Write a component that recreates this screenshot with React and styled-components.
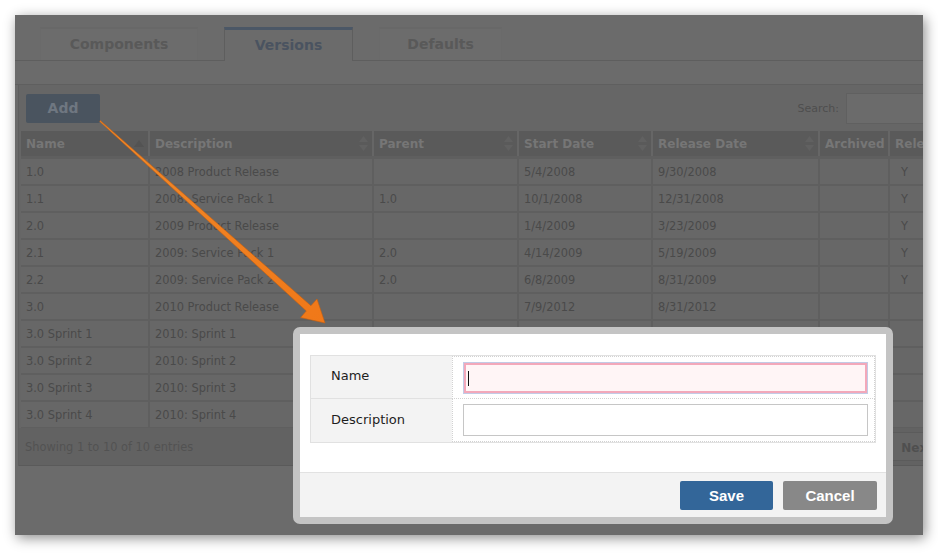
import styled, { createGlobalStyle } from 'styled-components';

const GlobalStyle = createGlobalStyle`
    html, body {
        margin: 0;
        padding: 0;
        background: #ffffff;
    }
    body {
        font-family: "DejaVu Sans", Verdana, sans-serif;
    }
`;

const COLS = '127px 222px 143px 132px 165px 68px 60px 80px';

const Page = styled.div`
    position: relative;
    width: 938px;
    height: 555px;
    padding: 15px;
    box-sizing: border-box;
    overflow: hidden;
`;
const Screen = styled.div`
    position: relative;
    width: 908px;
    height: 520px;
    overflow: hidden;
    background: #6b6b6b;
    box-shadow: 2px 3px 12px rgba(0, 0, 0, 0.45);
`;
const TabBar = styled.div`
    display: flex;
    align-items: flex-end;
    gap: 26px;
    height: 46px;
    padding-left: 25px;
    box-sizing: border-box;
    border-bottom: 1px solid #5e5e5e;
`;
const Tab = styled.div`
    width: ${(p) => p.$w}px;
    height: ${(p) => (p.$active ? 34 : 33)}px;
    box-sizing: border-box;
    display: flex;
    align-items: center;
    justify-content: center;
    padding-bottom: 2px;
    font-weight: bold;
    font-size: 14px;
    color: ${(p) => (p.$active ? '#4a5360' : '#595959')};
    background: ${(p) => (p.$active ? '#6b6b6b' : '#6c6c6c')};
    border-top: ${(p) => (p.$active ? '3px solid #4b5766' : '2px solid #686868')};
    border-left: 1px solid ${(p) => (p.$active ? '#5e5e5e' : '#6a6a6a')};
    border-right: 1px solid ${(p) => (p.$active ? '#5e5e5e' : '#6a6a6a')};
    margin-bottom: ${(p) => (p.$active ? '-1px' : '0')};
`;
const Strip = styled.div`
    height: 23px;
    border-bottom: 1px solid #5f5f5f;
`;
const Panel = styled.div`
    margin-left: 3px;
    width: 985px;
    background: #666666;
    border-left: 1px solid #5f5f5f;
`;
const Toolbar = styled.div`
    display: flex;
    align-items: center;
    justify-content: space-between;
    height: 46px;
    padding: 0 8px 0 7px;
`;
const AddButton = styled.div`
    width: 74px;
    height: 29px;
    display: flex;
    align-items: center;
    justify-content: center;
    background: #4a545f;
    border-radius: 2px;
    color: #6f7781;
    font-weight: bold;
    font-size: 14px;
`;
const SearchGroup = styled.div`
    display: flex;
    align-items: center;
    gap: 7px;
    font-size: 11px;
    color: #4e4e4e;
`;
const SearchInput = styled.div`
    width: 148px;
    height: 29px;
    background: #6b6b6b;
    border: 1px solid #606060;
`;
const Table = styled.div`
    padding-left: 2px;
`;
const HeadRow = styled.div`
    display: grid;
    grid-template-columns: ${COLS};
    column-gap: 2px;
    height: 25px;
`;
const HeadCell = styled.div`
    position: relative;
    display: flex;
    align-items: center;
    padding-left: 5px;
    background: #5a5a5a;
    color: #767676;
    font-weight: bold;
    font-size: 12px;
    white-space: nowrap;
    overflow: hidden;
`;
const SortMark = styled.svg`
    position: absolute;
    right: 4px;
    top: 50%;
    transform: translateY(-50%);
`;
const Body = styled.div`
    display: grid;
    row-gap: 2px;
    padding: 3px 0 1px;
    background: #5f5f5f;
`;
const Row = styled.div`
    display: grid;
    grid-template-columns: ${COLS};
    column-gap: 2px;
    height: 25px;
`;
const Cell = styled.div`
    display: flex;
    align-items: center;
    padding-left: ${(p) => (p.$center ? '11px' : '5px')};
    background: #676767;
    color: #4a4a4a;
    font-size: 11.4px;
    white-space: nowrap;
    overflow: hidden;
`;
const Footer = styled.div`
    display: flex;
    align-items: center;
    justify-content: space-between;
    height: 38px;
    box-sizing: border-box;
    padding: 0 0 0 6px;
    background: #626262;
    border-bottom: 1px solid #5a5a5a;
    font-size: 11.4px;
    color: #525252;
`;
const Pager = styled.div`
    display: flex;
    gap: 4px;
    margin-right: 62px;
`;
const PageBtn = styled.div`
    height: 25px;
    display: flex;
    align-items: center;
    padding: 2px 8px 0;
    background: #656565;
    border: 1px solid #5b5b5b;
    font-weight: bold;
    font-size: 12px;
    color: #4f4f4f;
`;

const Dialog = styled.div`
    position: absolute;
    left: 278px;
    top: 312px;
    width: 600px;
    height: 197px;
    box-sizing: border-box;
    border: 7px solid #c4c4c4;
    border-radius: 7px;
    background: #ffffff;
    display: flex;
    flex-direction: column;
`;
const DialogBody = styled.div`
    padding: 21px 10px 0;
`;
const Form = styled.div`
    display: grid;
    grid-template-columns: 141px 1fr;
    border: 1px solid #e1e1e1;
`;
const Label = styled.div`
    height: 43px;
    box-sizing: border-box;
    display: flex;
    align-items: center;
    padding: 0 0 3px 20px;
    background: #f3f3f3;
    border-bottom: ${(p) => (p.$last ? 'none' : '1px solid #e1e1e1')};
    font-size: 13px;
    color: #1e1e1e;
`;
const Field = styled.div`
    height: 43px;
    box-sizing: border-box;
    padding: 5px 6px 0 10px;
    border: 1px dotted #d2d2d2;
    border-top: ${(p) => (p.$last ? 'none' : '1px dotted #d2d2d2')};
`;
const TextBox = styled.div`
    height: 32px;
    box-sizing: border-box;
    display: flex;
    align-items: center;
    padding-left: 4px;
    background: ${(p) => (p.$invalid ? '#fff5f6' : '#ffffff')};
    border: 1px solid ${(p) => (p.$invalid ? '#c2cbe6' : '#c6c6c6')};
    box-shadow: ${(p) => (p.$invalid ? 'inset 0 0 0 2px #f3a8ba' : 'none')};
`;
const Caret = styled.span`
    width: 1px;
    height: 15px;
    background: #111111;
`;
const DialogFooter = styled.div`
    margin-top: auto;
    height: 45px;
    box-sizing: border-box;
    display: flex;
    justify-content: flex-end;
    align-items: flex-start;
    gap: 10px;
    padding: 8px 9px 0 0;
    background: #f3f3f3;
    border-top: 1px solid #e2e2e2;
`;
const Button = styled.div`
    width: ${(p) => p.$w}px;
    height: 29px;
    display: flex;
    align-items: center;
    justify-content: center;
    padding-bottom: 1px;
    box-sizing: border-box;
    border-radius: 2px;
    background: ${(p) => p.$bg};
    color: #ffffff;
    font-family: "Liberation Sans", Arial, sans-serif;
    font-weight: bold;
    font-size: 15px;
`;
const Arrow = styled.svg`
    position: absolute;
    left: 0;
    top: 0;
    pointer-events: none;
`;

const columns = [
    { title: 'Name', sort: 'asc' },
    { title: 'Description', sort: 'both' },
    { title: 'Parent', sort: 'both' },
    { title: 'Start Date', sort: 'both' },
    { title: 'Release Date', sort: 'both' },
    { title: 'Archived' },
    { title: 'Released' },
    { title: '' },
];

// rows below the dialog only show their first two columns
const rows = [
    ['1.0', '2008 Product Release', '', '5/4/2008', '9/30/2008', '', 'Y'],
    ['1.1', '2008: Service Pack 1', '1.0', '10/1/2008', '12/31/2008', '', 'Y'],
    ['2.0', '2009 Product Release', '', '1/4/2009', '3/23/2009', '', 'Y'],
    ['2.1', '2009: Service Pack 1', '2.0', '4/14/2009', '5/19/2009', '', 'Y'],
    ['2.2', '2009: Service Pack 2', '2.0', '6/8/2009', '8/31/2009', '', 'Y'],
    ['3.0', '2010 Product Release', '', '7/9/2012', '8/31/2012', '', ''],
    ['3.0 Sprint 1', '2010: Sprint 1', '', '', '', '', ''],
    ['3.0 Sprint 2', '2010: Sprint 2', '', '', '', '', ''],
    ['3.0 Sprint 3', '2010: Sprint 3', '', '', '', '', ''],
    ['3.0 Sprint 4', '2010: Sprint 4', '', '', '', '', ''],
];

function SortIcon({ dir }) {
    if (dir === 'asc') {
        return (
            <SortMark width="10" height="8" viewBox="0 0 10 8">
                <polygon points="5,0 10,7 0,7" fill="#535353" />
            </SortMark>
        );
    }
    return (
        <SortMark width="9" height="16" viewBox="0 0 9 16">
            <polygon points="4.5,0 9,6 0,6" fill="#616161" />
            <polygon points="0,9 9,9 4.5,15" fill="#616161" />
        </SortMark>
    );
}

export default function App() {
    return (
        <Page>
            <GlobalStyle />
            <Screen>
                <TabBar>
                    <Tab $w={158}>Components</Tab>
                    <Tab $w={129} $active>Versions</Tab>
                    <Tab $w={123}>Defaults</Tab>
                </TabBar>
                <Strip />
                <Panel>
                    <Toolbar>
                        <AddButton>Add</AddButton>
                        <SearchGroup>
                            Search:
                            <SearchInput />
                        </SearchGroup>
                    </Toolbar>
                    <Table>
                        <HeadRow>
                            {columns.map((c, i) => (
                                <HeadCell key={i}>
                                    {c.title}
                                    {c.sort && <SortIcon dir={c.sort} />}
                                </HeadCell>
                            ))}
                        </HeadRow>
                        <Body>
                            {rows.map((r, i) => (
                                <Row key={i}>
                                    {r.map((v, j) => (
                                        <Cell key={j} $center={j === 6}>{v}</Cell>
                                    ))}
                                    <Cell />
                                </Row>
                            ))}
                        </Body>
                    </Table>
                    <Footer>
                        Showing 1 to 10 of 10 entries
                        <Pager>
                            <PageBtn>Next</PageBtn>
                        </Pager>
                    </Footer>
                </Panel>

                <Dialog>
                    <DialogBody>
                        <Form>
                            <Label>Name</Label>
                            <Field>
                                <TextBox $invalid>
                                    <Caret />
                                </TextBox>
                            </Field>
                            <Label $last>Description</Label>
                            <Field $last>
                                <TextBox />
                            </Field>
                        </Form>
                    </DialogBody>
                    <DialogFooter>
                        <Button $w={93} $bg="#336699">Save</Button>
                        <Button $w={94} $bg="#888888">Cancel</Button>
                    </DialogFooter>
                </Dialog>
            </Screen>

            {/* callout arrow from Add to the dialog */}
            <Arrow width="938" height="555" viewBox="0 0 938 555">
                <defs>
                    <linearGradient id="orange" x1="0" y1="0" x2="1" y2="1">
                        <stop offset="0" stopColor="#f08a2c" />
                        <stop offset="1" stopColor="#f07818" />
                    </linearGradient>
                </defs>
                <polygon
                    points="100.3,120.6 310.9,305.7 317,299 325,323 300.6,317.6 306.3,310.9 99.7,121.4"
                    fill="url(#orange)"
                    stroke="#c8600f"
                    strokeWidth="0.6"
                    strokeLinejoin="round"
                />
            </Arrow>
        </Page>
    );
}
